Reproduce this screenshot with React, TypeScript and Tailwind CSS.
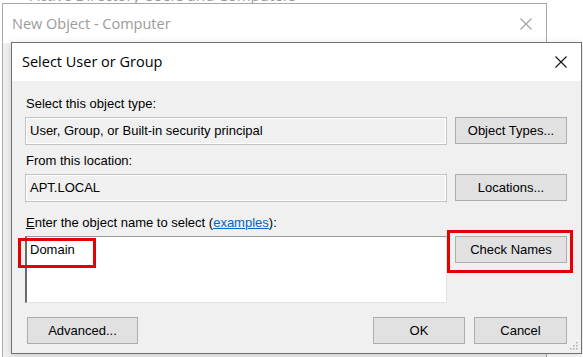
import React from 'react';

const CloseIcon = ({ color }: { color: string }) => (
  <svg width="12" height="12" viewBox="0 0 12 12">
    <path d="M0.5 0.5 L11.5 11.5 M11.5 0.5 L0.5 11.5" stroke={color} strokeWidth="1.1" fill="none" />
  </svg>
);

const Btn = ({ label, w }: { label: string; w: string }) => (
  <div className={`${w} h-[27px] shrink-0 flex items-center justify-center bg-[#e1e1e1] border border-[#adadad] text-[13px] text-black`}>
    {label}
  </div>
);

const ReadOnlyBox = ({ value }: { value: string }) => (
  <div className="w-[422px] h-[28px] shrink-0 flex items-center pl-[4px] bg-[#f0f0f0] border border-[#c2c2c2] shadow-[inset_0_0_0_1px_#ffffff] text-[13px] text-black">
    {value}
  </div>
);

const App = () => {
  return (
    <div className="relative w-[583px] h-[357px] overflow-hidden bg-white font-['Liberation_Sans',Arial,sans-serif]">
      {/* window behind */}
      <div className="absolute left-[30px] top-[-15px] text-[15px] leading-[20px] text-[#9a9a9a] font-['Open_Sans',sans-serif]">
        Active Directory Users and Computers
      </div>

      <div className="absolute left-[2px] top-[3px] w-[545px] h-[400px] flex flex-col border border-[#a9a9a9] bg-[#f0f0f0]">
        <div className="h-[39px] flex items-center justify-between pl-[9px] pr-[14px] bg-white">
          <span className="text-[14.5px] text-[#9b9b9b] font-['Open_Sans',sans-serif]">New Object - Computer</span>
          <CloseIcon color="#a0a0a0" />
        </div>
      </div>

      {/* dialog */}
      <div className="absolute left-[11px] top-[42px] w-[571px] h-[312px] flex flex-col border border-[#707070] bg-[#f0f0f0] shadow-[0_2px_8px_rgba(0,0,0,0.15)]">
        <div className="h-[38px] shrink-0 flex items-center justify-between pl-[10px] pr-[14px] bg-white">
          <span className="text-[14.5px] text-black font-['Open_Sans',sans-serif]">Select User or Group</span>
          <CloseIcon color="#111111" />
        </div>

        <div className="flex-1 flex flex-col pt-[15px] pl-[13px] pr-[14px]">
          <div className="h-[16px] leading-[16px] pl-[1px] text-[13px] text-black">Select this object type:</div>
          <div className="mt-[5px] flex gap-[8px]">
            <ReadOnlyBox value="User, Group, or Built-in security principal" />
            <Btn label="Object Types..." w="w-[112px]" />
          </div>

          <div className="mt-[8px] h-[16px] leading-[16px] pl-[1px] text-[13px] text-black">From this location:</div>
          <div className="mt-[5px] flex gap-[8px]">
            <ReadOnlyBox value="APT.LOCAL" />
            <Btn label="Locations..." w="w-[112px]" />
          </div>

          <div className="mt-[13px] h-[16px] leading-[16px] pl-[1px] text-[13px] text-black">
            <span className="underline">E</span>nter the object name to select (
            <span className="text-[#0066cc] underline">examples</span>):
          </div>
          <div className="mt-[5px] flex gap-[8px]">
            <div className="relative w-[422px] h-[67px] shrink-0 bg-white border-l-2 border-t border-r border-b border-l-[#6a6a6a] border-t-[#9a9a9a] border-r-[#e3e3e3] border-b-[#e3e3e3] pl-[3px] pt-[5px]">
              <div className="text-[13px] leading-[16px] text-black">Domain</div>
              <div className="absolute left-[-9px] top-[1px] w-[78px] h-[30px] border-[3px] border-[#e60000]" />
            </div>
            <div className="relative self-start">
              <Btn label="Check Names" w="w-[112px]" />
              <div className="absolute left-[-8px] top-[-6px] w-[126px] h-[43px] border-[3px] border-[#e60000]" />
            </div>
          </div>

          <div className="mt-[14px] flex justify-between">
            <div className="pl-[2px]">
              <Btn label="Advanced..." w="w-[111px]" />
            </div>
            <div className="flex gap-[9px]">
              <Btn label="OK" w="w-[92px]" />
              <Btn label="Cancel" w="w-[93px]" />
            </div>
          </div>
        </div>

        <svg className="absolute right-[3px] bottom-[3px]" width="8" height="8" viewBox="0 0 8 8">
          <rect x="6" y="0" width="1.5" height="1.5" fill="#b0b0b0" />
          <rect x="3" y="3" width="1.5" height="1.5" fill="#b0b0b0" />
          <rect x="6" y="3" width="1.5" height="1.5" fill="#b0b0b0" />
          <rect x="0" y="6" width="1.5" height="1.5" fill="#b0b0b0" />
          <rect x="3" y="6" width="1.5" height="1.5" fill="#b0b0b0" />
          <rect x="6" y="6" width="1.5" height="1.5" fill="#b0b0b0" />
        </svg>
      </div>
    </div>
  );
};

export default App;
